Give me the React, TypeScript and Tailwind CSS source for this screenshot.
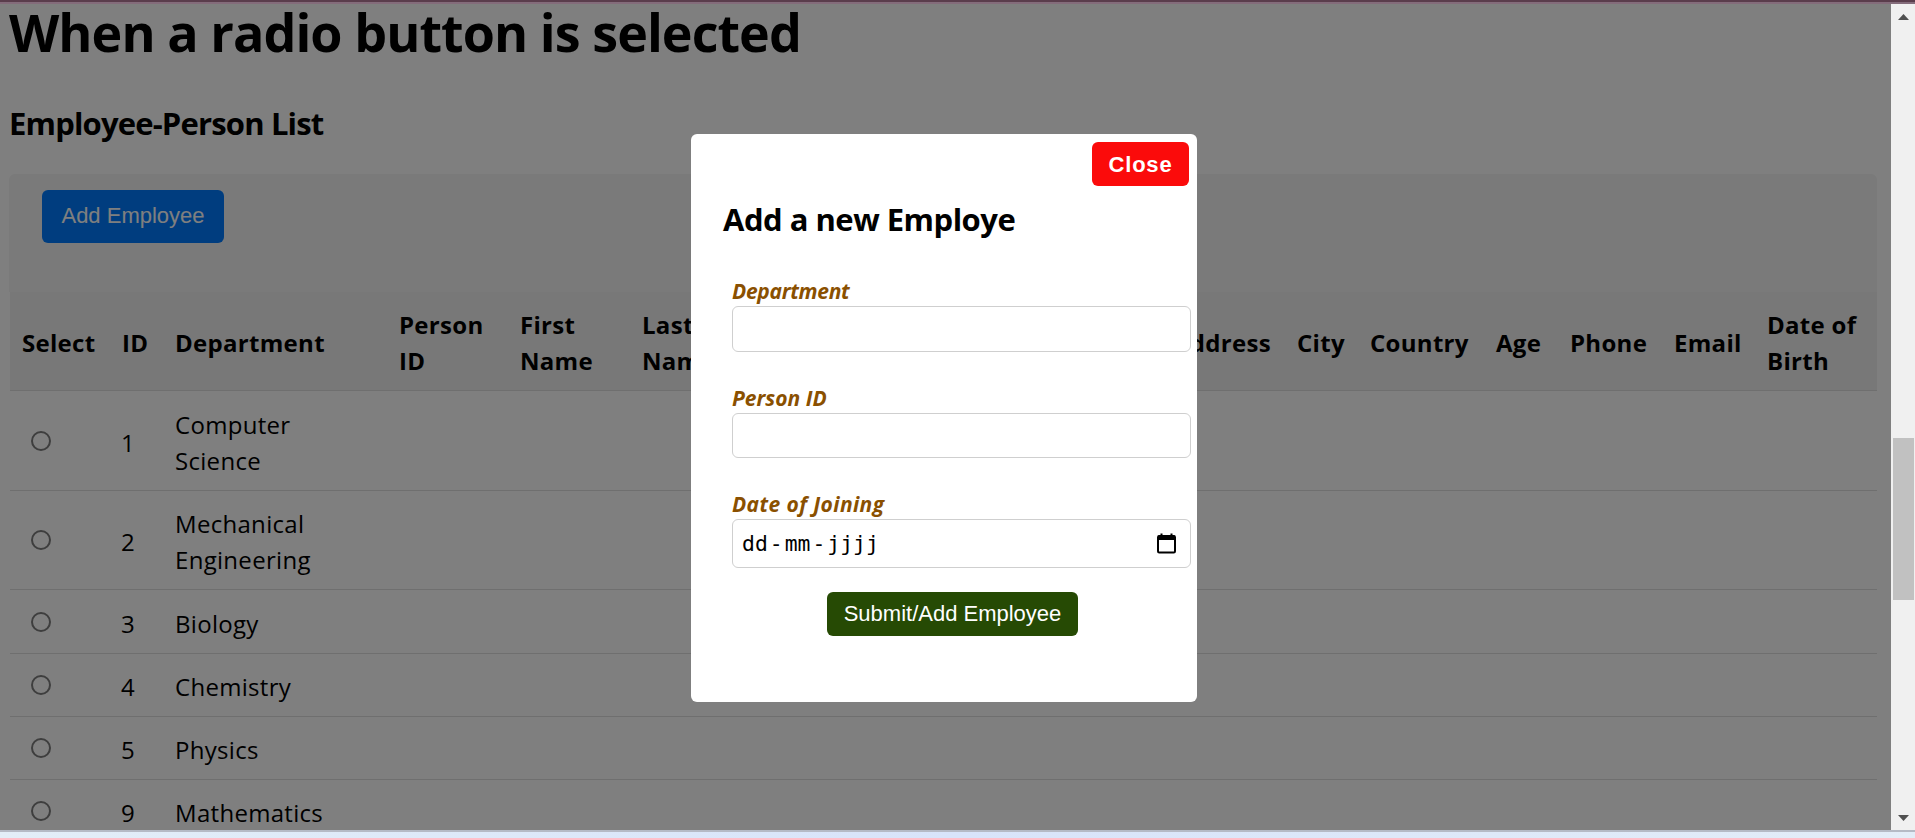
import React from "react";

const COLUMNS = [
  { label: "Select", width: "w-[100px]" },
  { label: "ID", width: "w-[53px]" },
  { label: "Department", width: "w-[224px]" },
  { label: "Person ID", width: "w-[121px]" },
  { label: "First Name", width: "w-[122px]" },
  { label: "Last Name", width: "w-[122px]" },
  { label: "Gender", width: "w-[409px]" },
  { label: "Address", width: "w-[124px]" },
  { label: "City", width: "w-[73px]" },
  { label: "Country", width: "w-[126px]" },
  { label: "Age", width: "w-[74px]" },
  { label: "Phone", width: "w-[104px]" },
  { label: "Email", width: "w-[93px]" },
  { label: "Date of Birth", width: "w-[122px]" },
];

const EMPLOYEES = [
  { id: 1, department: "Computer Science", height: "h-[100px]" },
  { id: 2, department: "Mechanical Engineering", height: "h-[99px]" },
  { id: 3, department: "Biology", height: "h-[64px]" },
  { id: 4, department: "Chemistry", height: "h-[63px]" },
  { id: 5, department: "Physics", height: "h-[63px]" },
  { id: 9, department: "Mathematics", height: "h-[63px]" },
];

const CELL = "border-b border-[#dedede] align-middle";

function EmployeeTable() {
  return (
    <table className="ml-px w-[1867px] table-fixed border-separate border-spacing-0 text-left text-[24px] leading-[36px]">
      <colgroup>
        {COLUMNS.map((c) => (
          <col key={c.label} className={c.width} />
        ))}
      </colgroup>
      <thead>
        <tr className="h-[99px] bg-[#f1f1f1]">
          {COLUMNS.map((c) => (
            <th key={c.label} className={`${CELL} pt-[3px] pr-[10px] pl-[12px] font-bold tracking-[0.3px]`}>
              {c.label}
            </th>
          ))}
        </tr>
      </thead>
      <tbody>
        {EMPLOYEES.map((e) => (
          <tr key={e.id} className={e.height}>
            <td className={`${CELL} pl-[21px]`}>
              <span className="block size-5 rounded-full border-2 border-[#7c7c7c]" />
            </td>
            <td className={`${CELL} pt-[4px] pl-[11px]`}>{e.id}</td>
            <td className={`${CELL} pt-[4px] pl-[12px] tracking-[0.3px]`}>
              <span className="block w-[150px]">{e.department}</span>
            </td>
            <td className={CELL} colSpan={11} />
          </tr>
        ))}
      </tbody>
    </table>
  );
}

function CalendarIcon() {
  return (
    <svg width="19" height="21" viewBox="0 0 19 21" fill="none">
      <path d="M4.5 0.5V4M14.5 0.5V4" stroke="#000" strokeWidth="2" />
      <rect x="1" y="3" width="17" height="16.5" rx="1.2" stroke="#000" strokeWidth="2" />
      <path d="M1 2.5H18V7H1Z" fill="#000" />
    </svg>
  );
}

function DatePlaceholder() {
  return (
    <span className="flex gap-[2px] font-['DejaVu_Sans_Mono',monospace] text-[21.4px] leading-none">
      <span>dd</span>
      <span>-</span>
      <span>mm</span>
      <span>-</span>
      <span>jjjj</span>
    </span>
  );
}

const LABEL = "text-[21px] leading-[24px] font-bold italic text-[#8a5000]";
const FIELD = "mt-[3px] w-[459px] rounded-[6px] border border-[#cfcfcf] bg-white";

function AddEmployeeModal() {
  return (
    <div className="absolute top-[134px] left-[691px] flex h-[568px] w-[506px] flex-col rounded-[6px] bg-white">
      <button className="mt-2 mr-2 h-[44px] w-[97px] self-end rounded-[6px] bg-[#fb0b0b] font-['Liberation_Sans',sans-serif] text-[22px] font-bold tracking-[0.8px] text-white">
        Close
      </button>
      <h3 className="mt-[14px] ml-8 text-[31px] leading-[38px] font-bold tracking-[-0.5px]">Add a new Employe</h3>
      <form className="mt-[41px] flex flex-col pl-[41px]">
        <label className={`${LABEL} tracking-[-0.3px]`}>Department</label>
        <div className={`${FIELD} h-[46px]`} />
        <label className={`${LABEL} mt-[34px]`}>Person ID</label>
        <div className={`${FIELD} h-[45px]`} />
        <label className={`${LABEL} mt-[34px] tracking-[0.4px]`}>Date of Joining</label>
        <div className={`${FIELD} flex h-[49px] items-center justify-between pr-[14px] pl-[9px]`}>
          <DatePlaceholder />
          <CalendarIcon />
        </div>
        <button
          type="button"
          className="mt-6 ml-[95px] h-[44px] w-[251px] rounded-[6px] bg-[#264a04] pb-px font-['Liberation_Sans',sans-serif] text-[22px] text-white"
        >
          Submit/Add Employee
        </button>
      </form>
    </div>
  );
}

function Scrollbar() {
  return (
    <div className="flex w-6 shrink-0 flex-col items-center bg-[#f0f0f0]">
      <svg className="mt-[10px]" width="11" height="6" viewBox="0 0 11 6">
        <path d="M0 6L5.5 0L11 6Z" fill="#505050" />
      </svg>
      <div className="mt-[418px] h-[162px] w-[21px] bg-[#c1c1c1]" />
      <svg className="mt-auto mb-[9px]" width="11" height="6" viewBox="0 0 11 6">
        <path d="M0 0L5.5 6L11 0Z" fill="#505050" />
      </svg>
    </div>
  );
}

export default function App() {
  return (
    <div className="relative flex h-[838px] w-[1915px] flex-col overflow-hidden font-['Open_Sans','Noto_Sans',sans-serif] text-black">
      <div className="h-1 shrink-0 border-b-2 border-[#846c7b] bg-[#5a3d4c]" />
      <div className="flex h-[826px] shrink-0">
        <div className="relative flex-1 overflow-hidden bg-white">
          <div className="px-[9px] pt-px">
            <h1 className="text-[52px] leading-[54px] font-bold tracking-[-0.93px]">When a radio button is selected</h1>
            <h2 className="mt-[45px] text-[31px] leading-[38px] font-bold tracking-[-0.83px]">Employee-Person List</h2>
            <div className="mt-8 h-[118px] w-[1868px] rounded-t-[6px] bg-[#f4f4f4] pt-4 pl-[33px]">
              <button className="h-[53px] w-[182px] rounded-[6px] bg-[#007bff] pb-[2px] font-['Liberation_Sans',sans-serif] text-[22px] text-white">
                Add Employee
              </button>
            </div>
            <EmployeeTable />
          </div>
          <div className="absolute inset-0 bg-black/50" />
        </div>
        <Scrollbar />
      </div>
      <div className="h-2 shrink-0 border-t-2 border-[#b5bac5] bg-linear-to-r from-[#e3eef8] via-[#d8e4fa] to-[#e3edf8]" />
      <AddEmployeeModal />
    </div>
  );
}
